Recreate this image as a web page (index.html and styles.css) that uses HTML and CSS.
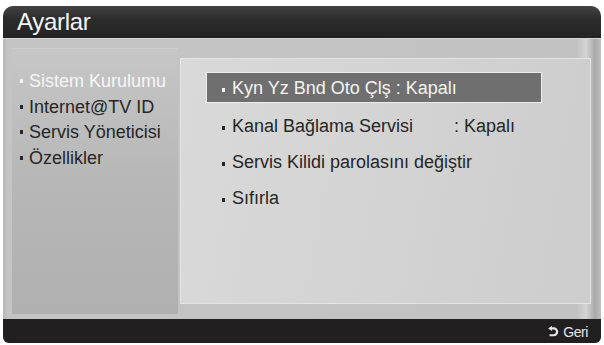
FILE: index.html
```html
<!DOCTYPE html>
<html lang="tr">
<head>
<meta charset="utf-8">
<title>Ayarlar</title>
<link rel="stylesheet" href="styles.css">
</head>
<body>
<div class="tv">
  <header class="titlebar">Ayarlar</header>
  <main class="content">
    <nav class="sidebar">
      <div class="nav-item active"><span class="dot"></span>Sistem Kurulumu</div>
      <div class="nav-item"><span class="dot"></span>Internet@TV ID</div>
      <div class="nav-item"><span class="dot"></span>Servis Yöneticisi</div>
      <div class="nav-item"><span class="dot"></span>Özellikler</div>
    </nav>
    <section class="panel">
      <div class="row selected"><span class="dot"></span>Kyn Yz Bnd Oto Çlş : Kapalı</div>
      <div class="row"><span class="dot"></span><span class="label">Kanal Bağlama Servisi</span><span class="value">: Kapalı</span></div>
      <div class="row"><span class="dot"></span>Servis Kilidi parolasını değiştir</div>
      <div class="row"><span class="dot"></span>Sıfırla</div>
    </section>
  </main>
  <footer class="footer">
    <span class="back">
      <svg class="back-icon" width="11" height="11" viewBox="0 0 10 10" aria-hidden="true">
        <path d="M2.4 2.2 H5.2 A3 3 0 0 1 5.2 8.4 H1.4" fill="none" stroke="#e8e8e8" stroke-width="2"/>
        <path d="M0.2 2.2 L3.6 -0.2 L3.6 4.6 Z" fill="#e8e8e8"/>
      </svg>
      Geri
    </span>
  </footer>
</div>
</body>
</html>
```
FILE: styles.css
```css
* { box-sizing: border-box; }
html, body { margin: 0; padding: 0; background: #ffffff; }
body { font-family: "Liberation Sans", Arial, sans-serif; }

.tv {
  margin: 6px 3px 0 3px;
  width: 598px;
  height: 337px;
  border-radius: 10px 10px 6px 6px;
  overflow: hidden;
  display: flex;
  flex-direction: column;
  background: #bdbdbd;
}

.titlebar {
  height: 32px;
  flex: none;
  background: linear-gradient(#434343, #2c2c2c 40%, #232323);
  color: #f4f4f4;
  font-size: 24px;
  line-height: 32px;
  padding-left: 14px;
  letter-spacing: -0.3px;
}

.content {
  flex: 1;
  display: flex;
  align-items: flex-start;
  padding: 9px 10px 5px 9px;
  gap: 2px;
  background: linear-gradient(90deg, #b7b7b7 0, #c4c4c4 4px, #c2c2c2 96%, #d4d4d4 97.5%, #a9a9a9 99%, #c0c0c0 100%);
  border-top: 1px solid #d6d6d6;
}

.sidebar {
  width: 166px;
  height: 266px;
  padding-top: 20px;
  background: linear-gradient(#c6c6c6, #b7b7b7 50%, #b0b0b0);
  border-top: 1px solid #cdcdcd;
}

.nav-item {
  font-size: 18px;
  line-height: 25.5px;
  color: #262626;
  padding-left: 8px;
  white-space: nowrap;
}
.nav-item.active { color: #f6f6f6; }

.dot {
  display: inline-block;
  width: 3px;
  height: 4px;
  background: currentColor;
  margin-right: 6px;
  vertical-align: 4px;
}

.panel {
  width: 411px;
  height: 246px;
  margin-top: 10px;
  padding: 13px 0 0 25px;
  background: linear-gradient(100deg, #d9d9d9, #d2d2d2 60%, #cdcdcd);
  border: 1px solid #e4e4e4;
}

.row {
  font-size: 18px;
  height: 36px;
  line-height: 36px;
  color: #262626;
  padding-left: 16px;
  white-space: nowrap;
  display: flex;
  align-items: center;
}
.row .dot { vertical-align: middle; margin-right: 7px; margin-top: 3px; }

.row.selected {
  width: 336px;
  height: 31px;
  line-height: 31px;
  background: #6f6f6f;
  color: #f4f4f4;
  border: 1px solid #ececec;
  padding-left: 15px;
  padding-top: 1px;
  margin-bottom: 5px;
}

.label { width: 222px; }

.footer {
  height: 25px;
  flex: none;
  background: #221f20;
  display: flex;
  justify-content: flex-end;
  align-items: center;
  padding-right: 13px;
}

.back {
  color: #e4e4e4;
  font-size: 14px;
  display: flex;
  align-items: center;
  gap: 4px;
  letter-spacing: -0.4px;
}
.back-icon { display: block; }
```
